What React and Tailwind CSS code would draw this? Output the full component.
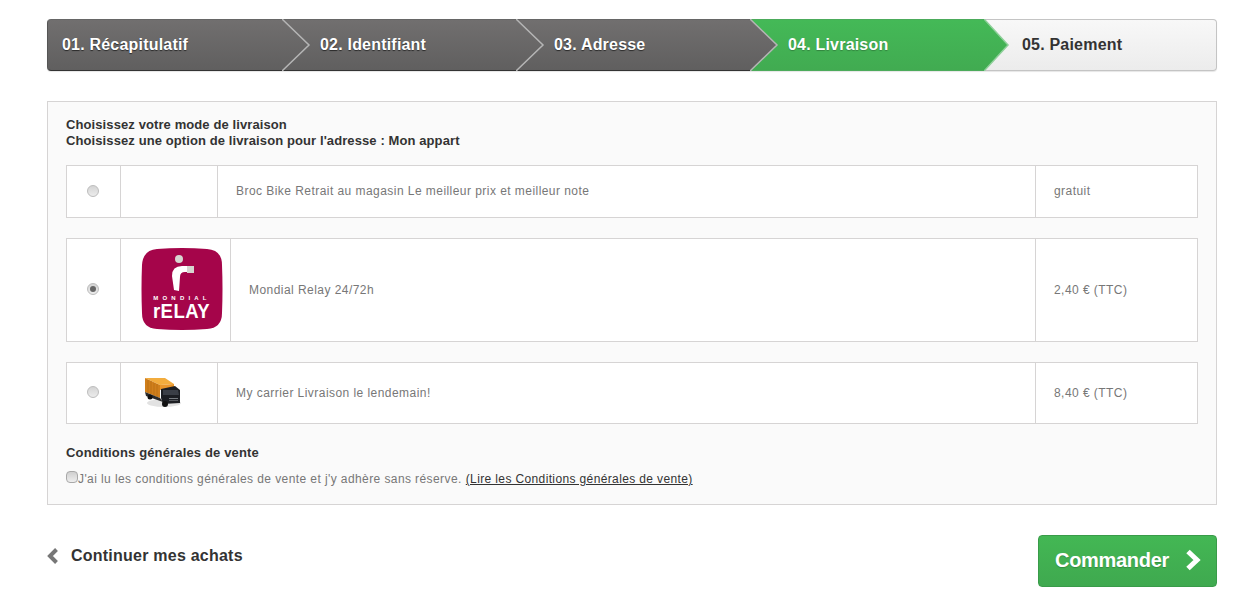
const steps = [
    { label: '01. Récapitulatif', state: 'done' },
    { label: '02. Identifiant', state: 'done' },
    { label: '03. Adresse', state: 'done' },
    { label: '04. Livraison', state: 'current' },
    { label: '05. Paiement', state: 'todo' },
];

const Chevron = ({ id, from, to, line, tip }) => (
    <svg className="absolute top-[-1px] left-full z-10 w-[29px] h-[52px]" viewBox="0 0 29 52">
        <defs>
            <linearGradient id={id} x1="0" y1="0" x2="0" y2="1">
                <stop offset="0" stopColor={from} />
                <stop offset="1" stopColor={to} />
            </linearGradient>
        </defs>
        <polygon points={`0,0 ${tip},26 0,52`} fill={`url(#${id})`} />
        <polyline points={`0,0 ${tip},26 0,52`} fill="none" stroke={line} strokeWidth="1.5" />
    </svg>
);

const Step = ({ step, index }) => {
    const { label, state } = step;
    const last = index === steps.length - 1;
    let tone = 'bg-gradient-to-b from-[#716f6f] to-[#605f5f] text-white [text-shadow:0_1px_1px_rgba(0,0,0,0.6)] border-y border-t-[#666] border-b-[#333]';
    if (state === 'current') tone = 'bg-gradient-to-b from-[#44b957] to-[#41ab51] text-white [text-shadow:0_1px_1px_rgba(0,0,0,0.25)] border-y border-[#4cab5b]';
    if (state === 'todo') tone = 'bg-gradient-to-b from-[#f8f8f8] to-[#ececec] text-[#333] border-y border-r border-[#c4c4c4] rounded-r';
    return (
        <li
            className={`relative flex items-center h-full ${tone} ${last ? 'flex-1 pl-[38px]' : 'w-[234px]'} ${index === 0 ? 'w-[235px] pl-[14px] rounded-l border-l border-l-[#555]' : ''} ${index > 0 && !last ? 'pl-[38px]' : ''}`}
        >
            {label}
            {!last && (
                <Chevron
                    id={`step-arrow-${index}`}
                    from={state === 'current' ? '#44b957' : '#716f6f'}
                    to={state === 'current' ? '#41ab51' : '#605f5f'}
                    line={state === 'current' ? '#8fd09a' : '#b5b5b5'}
                    tip={state === 'current' ? 24 : 27}
                />
            )}
        </li>
    );
};

const Radio = ({ checked }) => (
    <span className="flex items-center justify-center w-3 h-3 -ml-px -mt-[2px] rounded-full border border-[#bcbcbc] bg-gradient-to-b from-[#d4d4d4] to-[#ececec]">
        {checked && <span className="w-1.5 h-1.5 rounded-full bg-[#666]" />}
    </span>
);

const RelayLogo = () => (
    <svg width="82" height="82" viewBox="0 0 82 82" className="-mt-[2px]">
        <path d="M16 1 Q41 -1 66 1 Q81 2 81 17 Q82 41 81 65 Q81 80 66 81 Q41 83 16 81 Q1 80 1 65 Q0 41 1 17 Q2 2 16 1Z" fill="#a5054a" />
        <circle cx="38" cy="11" r="4" fill="#d6d6d0" />
        <path d="M33 42 L31 28 Q31 18 41 18 L46 18 L46 24 L44 24 Q39 24 39 29 L38 43Z" fill="#ffffff" />
        <rect x="46" y="18" width="7" height="7" fill="#d6d6d0" />
        <text x="41" y="52" textAnchor="middle" fontFamily="Liberation Sans, sans-serif" fontSize="6" fontWeight="700" letterSpacing="4.2" fill="#ffffff">MONDIAL</text>
        <text x="12" y="70" textLength="57" lengthAdjust="spacingAndGlyphs" fontFamily="Liberation Sans, sans-serif" fontSize="20" fontWeight="700" fill="#ffffff">rELAY</text>
    </svg>
);

const Truck = () => (
    <svg width="38" height="32" viewBox="0 0 38 32" className="-mt-[2px]">
        <ellipse cx="21" cy="27" rx="17" ry="4" fill="#e2e2e2" />
        <polygon points="2,2 22,2 31,8 17,9" fill="#f2ac3d" />
        <polygon points="2,2 17,9 17,22 2,16" fill="#d07f1c" />
        <path d="M5 4 V17 M8 5 V18 M11 7 V20 M14 8 V21" stroke="#b86f14" strokeWidth="0.8" />
        <polygon points="17,9 31,8 31,12 17,14" fill="#e8952a" />
        <polygon points="18,13 32,10 37,14 37,27 20,28 18,22" fill="#1c1e23" />
        <polygon points="20,14 35,14 36,19 20,19" fill="#3a3e46" />
        <polygon points="2,16 17,22 20,26 3,20" fill="#2b2b2b" />
        <circle cx="7" cy="21" r="2.5" fill="#111" />
        <circle cx="22" cy="28" r="3" fill="#111" />
        <rect x="26" y="22" width="9" height="1" fill="#777b80" />
        <rect x="26" y="24" width="9" height="1" fill="#55585d" />
    </svg>
);

const carriers = [
    { id: 1, logo: null, logoCol: 'w-[97px] pl-[20px]', h: 'h-[53px]', name: 'Broc Bike Retrait au magasin Le meilleur prix et meilleur note', price: 'gratuit' },
    { id: 2, logo: <RelayLogo />, logoCol: 'w-[110px] pl-[20px]', h: 'h-[104px]', name: 'Mondial Relay 24/72h', price: '2,40 € (TTC)', checked: true },
    { id: 3, logo: <Truck />, logoCol: 'w-[97px] pl-[22px]', h: 'h-[62px]', name: 'My carrier Livraison le lendemain!', price: '8,40 € (TTC)' },
];

const Carrier = ({ c }) => (
    <div className={`flex ${c.h} bg-white border border-[#d6d4d4] text-[12px] tracking-[0.45px] text-[#777]`}>
        <div className="w-[54px] flex items-center justify-center border-r border-[#d6d4d4]">
            <Radio checked={c.checked} />
        </div>
        <div className={`${c.logoCol} flex items-center border-r border-[#d6d4d4]`}>
            {c.logo}
        </div>
        <div className="flex-1 flex items-center border-r border-[#d6d4d4] pl-[18px] pb-px">{c.name}</div>
        <div className="w-[161px] flex items-center pl-[18px] pb-px">{c.price}</div>
    </div>
);

export default function App() {
    return (
        <div className="min-h-screen bg-white pl-[47px] pr-[20px] pt-[19px] font-['Liberation_Sans',Arial,sans-serif]">
            <ol className="flex h-[52px] text-[16px] font-bold tracking-[0.2px] rounded shadow-[0_1px_1px_rgba(0,0,0,0.1)]">
                {steps.map((s, i) => (
                    <Step key={s.label} step={s} index={i} />
                ))}
            </ol>

            <div className="mt-[30px] h-[404px] bg-[#fafafa] border border-[#d6d4d4] px-[18px] pt-[15px]">
                <p className="text-[13px] leading-4 font-bold text-[#333] tracking-[0.1px]">
                    Choisissez votre mode de livraison
                    <br />
                    Choisissez une option de livraison pour l'adresse : Mon appart
                </p>
                <div className="mt-4 flex flex-col gap-5">
                    {carriers.map(c => (
                        <Carrier key={c.id} c={c} />
                    ))}
                </div>
                <h3 className="mt-[21px] text-[13px] leading-4 font-bold text-[#333] tracking-[0.15px]">Conditions générales de vente</h3>
                <div className="mt-[10px] flex items-center text-[12px] leading-4 tracking-[0.41px] text-[#777]">
                    <span className="w-3 h-3 rounded-sm border border-[#a8a8a8] bg-gradient-to-b from-[#cfcfcf] to-[#eeeeee] -mt-[5px]" />
                    <span>J'ai lu les conditions générales de vente et j'y adhère sans réserve.</span>
                    <a className="ml-1 text-[#333] underline tracking-[0.37px]">(Lire les Conditions générales de vente)</a>
                </div>
            </div>

            <div className="mt-[30px] flex justify-between items-start">
                <a className="flex items-center mt-[9px] text-[16px] font-bold text-[#333] tracking-[0.23px]">
                    <svg width="12" height="16" viewBox="0 0 12 16" className="mr-3">
                        <polyline points="9.5,1.5 3,8 9.5,14.5" fill="none" stroke="#777" strokeWidth="4" />
                    </svg>
                    Continuer mes achats
                </a>
                <button className="flex items-center h-[52px] w-[179px] pl-4 pb-[2px] rounded bg-gradient-to-b from-[#43b754] to-[#3fa94f] border border-[#399b49] text-white text-[20px] tracking-[-0.3px] font-bold [text-shadow:0_1px_1px_rgba(0,0,0,0.2)]">
                    Commander
                    <svg width="16" height="22" viewBox="0 0 16 22" className="ml-4">
                        <polyline points="3,2.5 12,11 3,19.5" fill="none" stroke="#fff" strokeWidth="5" />
                    </svg>
                </button>
            </div>
        </div>
    );
}
